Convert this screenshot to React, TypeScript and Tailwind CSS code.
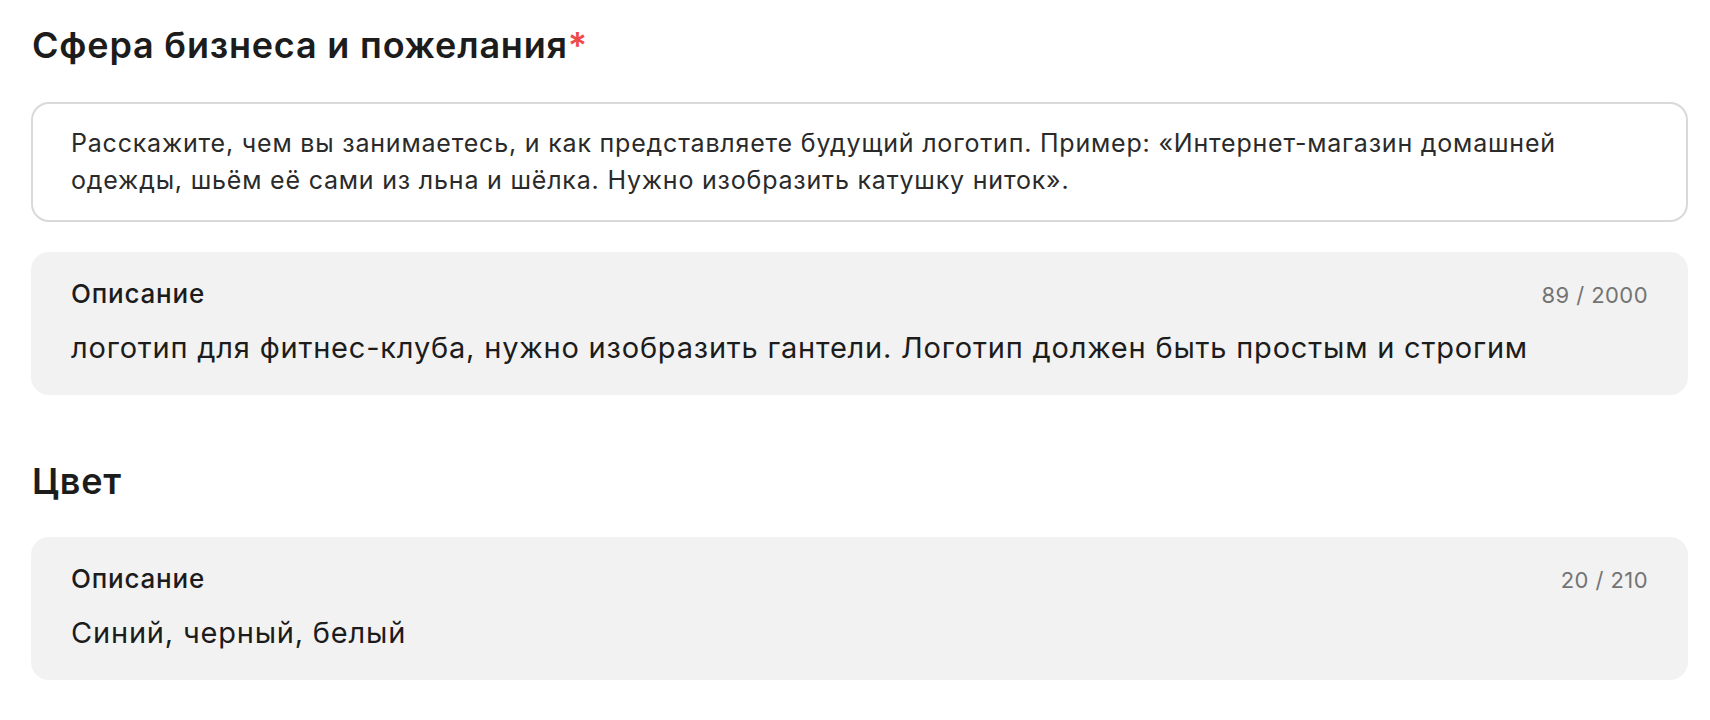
const Field = ({ value, count }: { value: string; count: string }) => (
  <div className="rounded-[18px] bg-[#f2f2f2] px-[40px] pt-[26px] pb-[29px]">
    <div className="flex items-baseline justify-between">
      <span className="text-[26px] leading-[32px] font-medium text-[#1c1c1c]">Описание</span>
      <span className="text-[22px] leading-[32px] tracking-[0.02em] text-[#747474]">{count}</span>
    </div>
    <div className="mt-[19px] text-[29px] leading-[36px] text-[#1c1c1c]">{value}</div>
  </div>
);

export default function App() {
  return (
    <div
      className="min-h-screen w-full bg-white tracking-[0.05em] text-[#1c1c1c]"
      style={{ fontFamily: "Inter, 'Noto Sans', sans-serif" }}
    >
      <div className="ml-[31px] w-[1657px] pt-[25px]">
        {/* Сфера бизнеса */}
        <h2 className="pl-[1px] text-[36px] leading-[40px] font-semibold">
          Сфера бизнеса и пожелания<span className="text-[#ef4a4a]">*</span>
        </h2>

        <div className="mt-[37px] rounded-[18px] border-2 border-[#d9d9d9] px-[38px] pt-[21px] pb-[21px] text-[25px] leading-[37px] text-[#2a2a2a]">
          Расскажите, чем вы занимаетесь, и как представляете будущий логотип. Пример: «Интернет-магазин домашней
          <br />
          одежды, шьём её сами из льна и шёлка. Нужно изобразить катушку ниток».
        </div>

        <div className="mt-[30px]">
          <Field
            value="логотип для фитнес-клуба, нужно изобразить гантели. Логотип должен быть простым и строгим"
            count="89 / 2000"
          />
        </div>

        {/* Цвет */}
        <h2 className="mt-[66px] pl-[1px] text-[36px] leading-[40px] font-semibold">Цвет</h2>

        <div className="mt-[36px]">
          <Field value="Синий, черный, белый" count="20 / 210" />
        </div>
      </div>
    </div>
  );
}
